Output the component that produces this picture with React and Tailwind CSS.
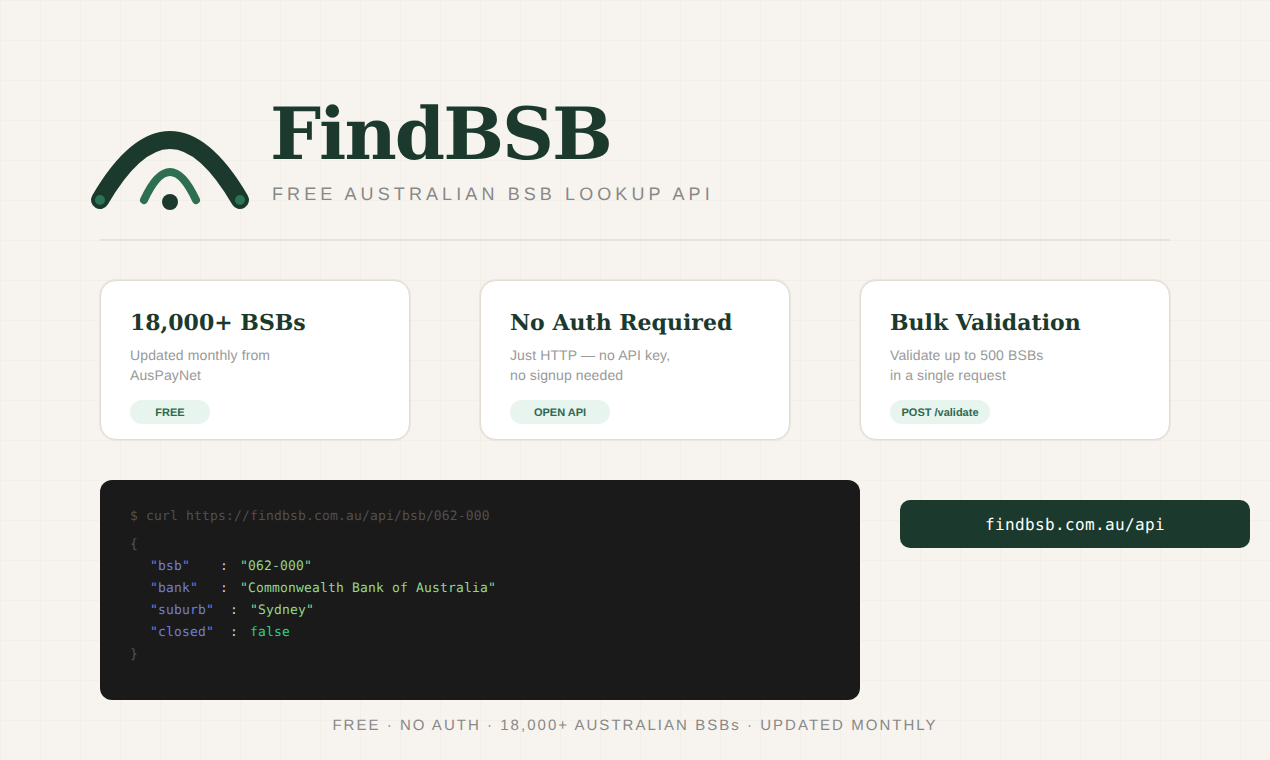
import React from "react";

const cards = [
  { title: "18,000+ BSBs", lines: ["Updated monthly from", "AusPayNet"], badge: "FREE", badgeW: "w-[80px]" },
  { title: "No Auth Required", lines: ["Just HTTP — no API key,", "no signup needed"], badge: "OPEN API", badgeW: "w-[100px]" },
  { title: "Bulk Validation", lines: ["Validate up to 500 BSBs", "in a single request"], badge: "POST /validate", badgeW: "w-[100px]" },
];

const rows = [
  { key: '"bsb"', keyW: "w-[70px]", value: '"062-000"', color: "text-[#90d890]" },
  { key: '"bank"', keyW: "w-[70px]", value: '"Commonwealth Bank of Australia"', color: "text-[#90d890]" },
  { key: '"suburb"', keyW: "w-[80px]", value: '"Sydney"', color: "text-[#90d890]" },
  { key: '"closed"', keyW: "w-[80px]", value: "false", color: "text-[#2ecc8a]" },
];

function Logo() {
  return (
    <svg width="172" height="90" viewBox="0 0 172 90" fill="none" className="shrink-0 overflow-visible">
      <path d="M0 80 Q70 -40 140 80" stroke="#1b3a2d" strokeWidth="18" strokeLinecap="round" />
      <path d="M44 80 Q70 24 96 80" stroke="#2d6f50" strokeWidth="8" strokeLinecap="round" />
      <circle cx="70" cy="82" r="8" fill="#1b3a2d" />
      <circle cx="0" cy="80" r="5" fill="#2d7353" />
      <circle cx="140" cy="80" r="5" fill="#2d7353" />
    </svg>
  );
}

export default function App() {
  return (
    <div className="h-[760px] overflow-hidden bg-[#f7f4ef] bg-[linear-gradient(#f2eee8_1px,transparent_1px),linear-gradient(90deg,#f2eee8_1px,transparent_1px)] bg-[size:40px_40px] px-[100px] font-['Liberation_Sans',sans-serif] [text-rendering:geometricPrecision]">
      {/* Cabecera */}
      <header className="flex h-[241px] items-start border-b-2 border-[#e8e2da]">
        <div className="mt-[120px]">
          <Logo />
        </div>
        <div className="mt-[94px]">
          <h1 className="-ml-[2px] font-['DejaVu_Serif',serif] text-[72px] leading-[80px] font-bold tracking-[-2px] text-[#1b3a2d]">FindBSB</h1>
          <p className="mt-[9px] text-[18px] leading-[22px] tracking-[4.1px] text-[#888888]">FREE AUSTRALIAN BSB LOOKUP API</p>
        </div>
      </header>

      {/* Tarjetas */}
      <section className="mt-[39px] flex justify-between">
        {cards.map((card) => (
          <div key={card.title} className="h-40 w-[310px] rounded-2xl border border-[#e2dcd4] bg-white px-[29px] pt-[26px] shadow-[0_0_0_1px_#ebe6df]">
            <h2 className="font-['DejaVu_Serif',serif] text-[22px] leading-8 font-bold text-[#1b3a2d]">{card.title}</h2>
            <p className="mt-[6px] text-sm leading-5 tracking-[0.12px] text-[#999999]">
              {card.lines[0]}
              <br />
              {card.lines[1]}
            </p>
            <span className={`mt-[15px] block h-6 rounded-full bg-[#e8f4ee] text-center text-[11px] leading-[26px] font-bold text-[#2d6a4f] ${card.badgeW}`}>
              {card.badge}
            </span>
          </div>
        ))}
      </section>

      {/* Ejemplo de API */}
      <section className="mt-10 flex w-[1150px] items-start gap-10">
        <div className="h-[220px] w-[760px] shrink-0 rounded-xl bg-[#1a1a1a] px-[30px] pt-[26px] font-['DejaVu_Sans_Mono',monospace] text-[13px] leading-[22px] tracking-[0.17px]">
          <div className="text-[#505050]">$ curl https://findbsb.com.au/api/bsb/062-000</div>
          <div className="mt-[6px] text-[#555555]">{"{"}</div>
          {rows.map((row) => (
            <div key={row.key} className="flex pl-5">
              <span className={`text-[#6c7fd8] ${row.keyW}`}>{row.key}</span>
              <span className="w-5 text-[#cccccc]">:</span>
              <span className={row.color}>{row.value}</span>
            </div>
          ))}
          <div className="text-[#555555]">{"}"}</div>
        </div>
        <div className="mt-5 h-12 w-[350px] shrink-0 rounded-[10px] bg-[#1b3a2d] pt-[1px] text-center font-['DejaVu_Sans_Mono',monospace] text-[16px] leading-[48px] tracking-[0.37px] text-white">
          findbsb.com.au/api
        </div>
      </section>

      <footer className="mt-[17px] text-center text-[15px] leading-[18px] tracking-[2.03px] text-[#888888]">
        FREE · NO AUTH · 18,000+ AUSTRALIAN BSBs · UPDATED MONTHLY
      </footer>
    </div>
  );
}
